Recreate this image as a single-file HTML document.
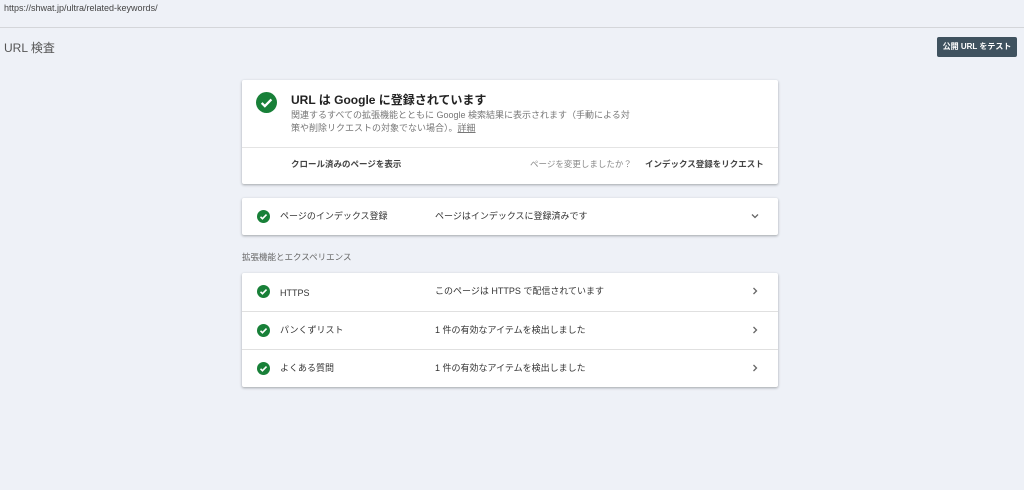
<!DOCTYPE html><html><head><meta charset="utf-8"><style>
body{margin:0;width:1024px;height:490px;background:#eef1f7;font-family:"Liberation Sans","Noto Sans CJK JP",sans-serif;color:#333;position:relative;overflow:hidden}
.a{position:absolute}
.card{position:absolute;left:242px;width:536px;background:#fff;box-shadow:0 1px 2px rgba(60,64,67,.3),0 1px 3px rgba(60,64,67,.15);border-radius:2px}
.row{position:relative;height:38px;font-size:9px;line-height:12px;color:#333}
.row+.row{border-top:1px solid #e0e0e0;height:37px}
.ck{position:absolute;left:15px;top:12px;width:13px;height:13px}
.l{position:absolute;left:38px;top:12px}
.m{position:absolute;left:193px;top:12px}
.ch{position:absolute;right:18px;top:13px}
</style></head><body>
<div class="a" style="left:4px;top:3px;font-size:9px;color:#444">https://shwat.jp/ultra/related-keywords/</div>
<div class="a" style="left:0;top:27px;width:1024px;height:1px;background:#d4d6da"></div>
<div class="a" style="left:4px;top:39px;font-size:12px;color:#555">URL 検査</div>
<div class="a" style="left:937px;top:37px;width:80px;height:20px;background:#3f525f;color:#fff;font-size:8px;font-weight:bold;line-height:20px;text-align:center;border-radius:2px">公開 URL をテスト</div>
<div class="card" style="top:80px;height:104px">
<svg class="a" style="left:14px;top:12px" width="21" height="21" viewBox="0 0 24 24"><circle cx="12" cy="12" r="12" fill="#188038"/><path d="M6.5 12.5l3.6 3.6 7.5-7.6" stroke="#fff" stroke-width="2.6" fill="none"/></svg>
<div class="a" style="left:49px;top:11px;font-size:12px;font-weight:bold;color:#222">URL は Google に登録されています</div>
<div class="a" style="left:49px;top:29px;font-size:9px;color:#777;line-height:13px;width:340px">関連するすべての拡張機能とともに Google 検索結果に表示されます（手動による対策や削除リクエストの対象でない場合）。<u>詳細</u></div>
<div class="a" style="left:0;top:67px;width:536px;height:1px;background:#e4e4e4"></div>
<div class="a" style="left:49px;top:78px;font-size:8.5px;color:#444;font-weight:bold">クロール済みのページを表示</div>
<div class="a" style="left:288px;top:78px;font-size:8.5px;color:#888">ページを変更しましたか？</div>
<div class="a" style="left:403px;top:78px;font-size:8.5px;color:#444;font-weight:bold">インデックス登録をリクエスト</div>
</div>
<div class="card" style="top:198px;height:37px">
<div class="row" style="height:37px"><svg class="ck" viewBox="0 0 24 24"><circle cx="12" cy="12" r="12" fill="#188038"/><path d="M6.5 12.5l3.6 3.6 7.5-7.6" stroke="#fff" stroke-width="3" fill="none"/></svg><span class="l">ページのインデックス登録</span><span class="m">ページはインデックスに登録済みです</span><svg class="ch" width="10" height="10" viewBox="0 0 10 10"><path d="M2 3.5l3 3 3-3" stroke="#666" stroke-width="1.3" fill="none"/></svg></div>
</div>
<div class="a" style="left:242px;top:251px;font-size:8.5px;color:#666">拡張機能とエクスペリエンス</div>
<div class="card" style="top:273px">
<div class="row"><svg class="ck" viewBox="0 0 24 24"><circle cx="12" cy="12" r="12" fill="#188038"/><path d="M6.5 12.5l3.6 3.6 7.5-7.6" stroke="#fff" stroke-width="3" fill="none"/></svg><span class="l" style="top:14px">HTTPS</span><span class="m">このページは HTTPS で配信されています</span><svg class="ch" width="10" height="10" viewBox="0 0 10 10"><path d="M3.5 2l3 3-3 3" stroke="#666" stroke-width="1.3" fill="none"/></svg></div>
<div class="row"><svg class="ck" viewBox="0 0 24 24"><circle cx="12" cy="12" r="12" fill="#188038"/><path d="M6.5 12.5l3.6 3.6 7.5-7.6" stroke="#fff" stroke-width="3" fill="none"/></svg><span class="l">パンくずリスト</span><span class="m">1 件の有効なアイテムを検出しました</span><svg class="ch" width="10" height="10" viewBox="0 0 10 10"><path d="M3.5 2l3 3-3 3" stroke="#666" stroke-width="1.3" fill="none"/></svg></div>
<div class="row"><svg class="ck" viewBox="0 0 24 24"><circle cx="12" cy="12" r="12" fill="#188038"/><path d="M6.5 12.5l3.6 3.6 7.5-7.6" stroke="#fff" stroke-width="3" fill="none"/></svg><span class="l">よくある質問</span><span class="m">1 件の有効なアイテムを検出しました</span><svg class="ch" width="10" height="10" viewBox="0 0 10 10"><path d="M3.5 2l3 3-3 3" stroke="#666" stroke-width="1.3" fill="none"/></svg></div>
</div>
</body></html>
